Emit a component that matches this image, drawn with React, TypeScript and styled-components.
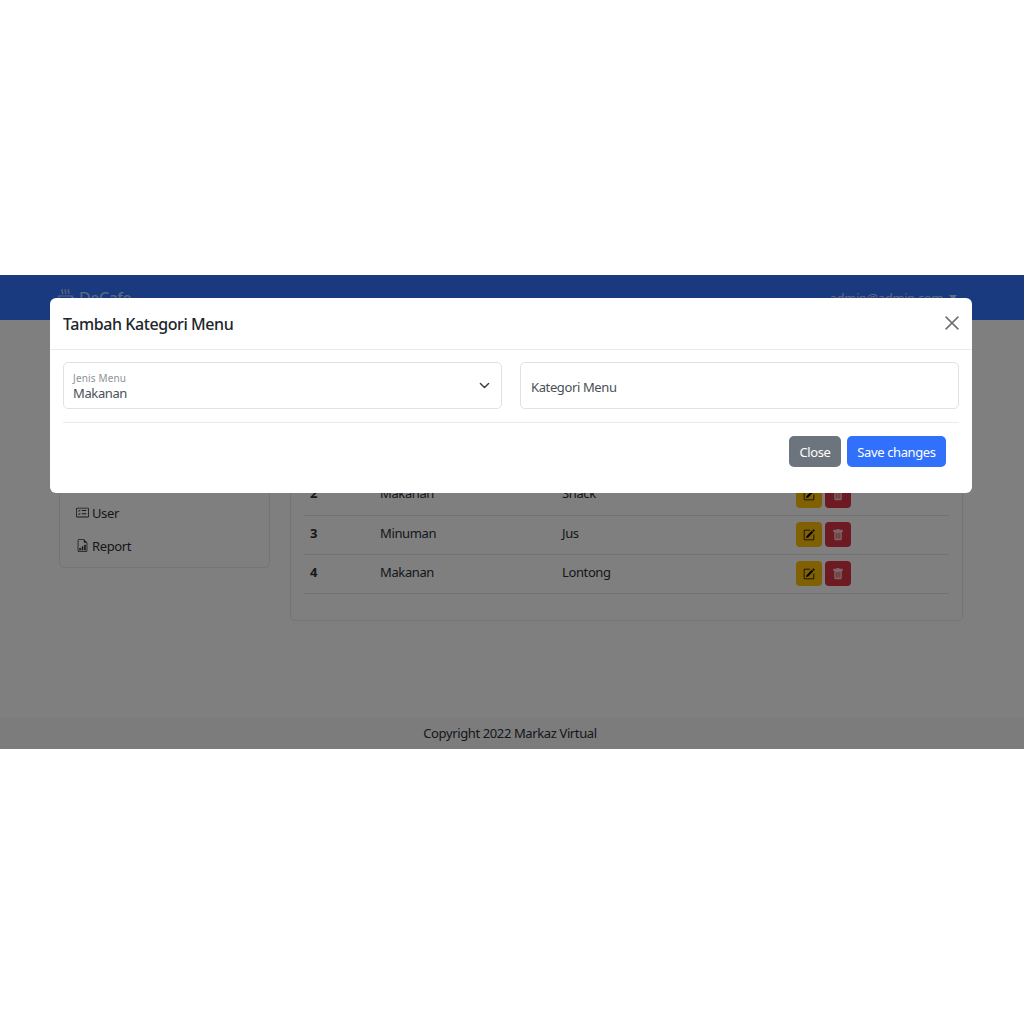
import styled, { createGlobalStyle } from 'styled-components';
import {
	BsCardChecklist,
	BsCupHot,
	BsFileEarmarkBarGraph,
	BsPencilSquare,
	BsTrashFill,
} from 'react-icons/bs';

const rows = [
	{ no: 2, jenis: 'Makanan', kategori: 'Snack' },
	{ no: 3, jenis: 'Minuman', kategori: 'Jus' },
	{ no: 4, jenis: 'Makanan', kategori: 'Lontong' },
];

const sideItems = [
	{ label: 'User', icon: <BsCardChecklist /> },
	{ label: 'Report', icon: <BsFileEarmarkBarGraph /> },
];

const App = () => {
	return (
		<>
			<GlobalStyle />
			<Stage>
				<Navbar>
					<Brand>
						<BsCupHot size={17} />
						DeCafe
					</Brand>
					<UserMenu>
						admin@admin.com
						<Caret />
					</UserMenu>
				</Navbar>
				<Content>
					<Sidebar>
						{sideItems.map((item) => (
							<SideItem key={item.label}>
								{item.icon}
								{item.label}
							</SideItem>
						))}
					</Sidebar>
					<MainCard>
						<Table>
							<tbody>
								{rows.map((row) => (
									<tr key={row.no}>
										<NoCell as="th">{row.no}</NoCell>
										<JenisCell>{row.jenis}</JenisCell>
										<KategoriCell>{row.kategori}</KategoriCell>
										<ActionCell>
											<ActionGroup>
												<EditButton>
													<BsPencilSquare size={12} />
												</EditButton>
												<DeleteButton>
													<BsTrashFill size={12} />
												</DeleteButton>
											</ActionGroup>
										</ActionCell>
									</tr>
								))}
							</tbody>
						</Table>
					</MainCard>
				</Content>
				<Footer>Copyright 2022 Markaz Virtual</Footer>
				<Backdrop />
				<Modal>
					<ModalHeader>
						<ModalTitle>Tambah Kategori Menu</ModalTitle>
						<CloseX aria-label="Close">
							<svg viewBox="0 0 14 14" width="14" height="14" fill="none">
								<path d="M.6.6l12.8 12.8M13.4.6.6 13.4" stroke="currentColor" strokeWidth="1.5" />
							</svg>
						</CloseX>
					</ModalHeader>
					<ModalBody>
						<FieldRow>
							<SelectField>
								<SelectText>
									<FloatLabel>Jenis Menu</FloatLabel>
									<SelectValue>Makanan</SelectValue>
								</SelectText>
								<svg viewBox="0 0 16 16" width="11" height="11" fill="none">
									<path
										d="m2 5 6 6 6-6"
										stroke="#343a40"
										strokeWidth="2"
										strokeLinecap="round"
										strokeLinejoin="round"
									/>
								</svg>
							</SelectField>
							<InputField>Kategori Menu</InputField>
						</FieldRow>
						<ModalFooter>
							<GrayButton>Close</GrayButton>
							<BlueButton>Save changes</BlueButton>
						</ModalFooter>
					</ModalBody>
				</Modal>
			</Stage>
		</>
	);
};

export default App;

const GlobalStyle = createGlobalStyle`
	body {
		margin: 0;
		background: #fff;
		color: #2b3035;
		font-family: "Noto Sans", "Open Sans", "Liberation Sans", sans-serif;
		font-size: 13px;
		letter-spacing: -0.38px;
	}
`;

const Stage = styled.div`
	position: relative;
	display: flex;
	flex-direction: column;
	height: 474px;
	margin-top: 275px;
	overflow: hidden;
`;

const Navbar = styled.nav`
	display: flex;
	flex: 0 0 45px;
	align-items: center;
	justify-content: space-between;
	padding: 0 67px 0 58px;
	background: #3474ff;
	color: rgba(255, 255, 255, 0.7);
`;

const Brand = styled.div`
	display: flex;
	align-items: center;
	gap: 4px;
	font-size: 16px;
`;

const UserMenu = styled.div`
	display: flex;
	align-items: center;
	gap: 6px;
	font-size: 13px;
`;

const Caret = styled.span`
	width: 0;
	height: 0;
	border-top: 5px solid currentColor;
	border-right: 4.5px solid transparent;
	border-left: 4.5px solid transparent;
`;

const Content = styled.main`
	display: flex;
	flex: 1;
	align-items: flex-start;
	gap: 20px;
	padding: 20px 61px 0 59px;
`;

/* the links above User sit behind the modal, so only the padding is kept */
const Sidebar = styled.aside`
	flex: 0 0 211px;
	box-sizing: border-box;
	padding: 155px 0 5px;
	border: 1px solid rgba(0, 0, 0, 0.09);
	border-radius: 5px;
`;

const SideItem = styled.div`
	display: flex;
	align-items: center;
	gap: 3px;
	height: 33px;
	padding-left: 16px;

	svg {
		width: 13px;
		height: 13px;
	}
`;

/* same for the toolbar and first table rows */
const MainCard = styled.section`
	flex: 0 0 673px;
	box-sizing: border-box;
	padding: 135px 13px 26px;
	border: 1px solid rgba(0, 0, 0, 0.09);
	border-radius: 5px;
`;

const Table = styled.table`
	width: 100%;
	border-collapse: collapse;
	table-layout: fixed;

	tr {
		height: 39px;
		border-bottom: 1px solid rgba(0, 0, 0, 0.1);
	}
`;

const Cell = styled.td`
	box-sizing: border-box;
	padding: 0 6px 4px;
	text-align: left;
	vertical-align: middle;
`;

const NoCell = styled(Cell)`
	width: 70px;
`;

const JenisCell = styled(Cell)`
	width: 182px;
`;

const KategoriCell = styled(Cell)`
	width: 234px;
`;

const ActionCell = styled(Cell)`
	width: 159px;
	padding-bottom: 0;
`;

const ActionGroup = styled.div`
	display: flex;
	gap: 3px;
`;

const IconButton = styled.button`
	display: flex;
	align-items: center;
	justify-content: center;
	width: 26px;
	height: 25px;
	padding: 0;
	border: 0;
	border-radius: 4px;
`;

const EditButton = styled(IconButton)`
	background: #ffc107;
	color: #000;
`;

const DeleteButton = styled(IconButton)`
	background: #dc3545;
	color: rgba(255, 255, 255, 0.75);
`;

const Footer = styled.footer`
	display: flex;
	flex: 0 0 32px;
	align-items: center;
	justify-content: center;
	padding-right: 4px;
	background: #f8f9fa;
`;

const Backdrop = styled.div`
	position: absolute;
	inset: 0;
	background: rgba(0, 0, 0, 0.5);
`;

const Modal = styled.div`
	position: absolute;
	top: 23px;
	left: 50px;
	width: 922px;
	height: 195px;
	border-radius: 6px;
	background: #fff;
`;

const ModalHeader = styled.header`
	display: flex;
	align-items: center;
	justify-content: space-between;
	box-sizing: border-box;
	height: 52px;
	padding: 0 13px;
	border-bottom: 1px solid #e9ecef;
`;

const ModalTitle = styled.h5`
	margin: 0;
	color: #212529;
	font-size: 16px;
	font-weight: 500;
	letter-spacing: -0.42px;
`;

const CloseX = styled.button`
	display: flex;
	margin-bottom: 2px;
	padding: 0;
	border: 0;
	background: none;
	color: #6f6f6f;
`;

const ModalBody = styled.div`
	padding: 12px 13px 0;
`;

const FieldRow = styled.div`
	display: grid;
	grid-template-columns: 439px 439px;
	justify-content: space-between;
	padding-bottom: 13px;
	border-bottom: 1px solid #e9ecef;
`;

const Field = styled.div`
	display: flex;
	align-items: center;
	box-sizing: border-box;
	height: 47px;
	border: 1px solid #dfe3e6;
	border-radius: 5px;
	color: #495057;
`;

const SelectField = styled(Field)`
	justify-content: space-between;
	padding: 0 11px 0 9px;
`;

const InputField = styled(Field)`
	padding: 2px 10px 0;
`;

const SelectText = styled.div`
	display: flex;
	flex-direction: column;
	padding-top: 4px;
`;

const FloatLabel = styled.span`
	color: #8d9296;
	font-size: 10px;
	line-height: 13.7px;
	letter-spacing: 0.15px;
`;

const SelectValue = styled.span`
	line-height: 17.8px;
`;

const ModalFooter = styled.footer`
	display: flex;
	justify-content: flex-end;
	gap: 6px;
	padding: 13px 13px 0 0;
`;

const FooterButton = styled.button`
	height: 31px;
	padding: 0;
	border: 0;
	border-radius: 5px;
	color: #fff;
	font: inherit;
	letter-spacing: inherit;
	white-space: nowrap;
`;

const GrayButton = styled(FooterButton)`
	width: 52px;
	background: #6c757d;
`;

const BlueButton = styled(FooterButton)`
	width: 99px;
	background: #3070fb;
`;
